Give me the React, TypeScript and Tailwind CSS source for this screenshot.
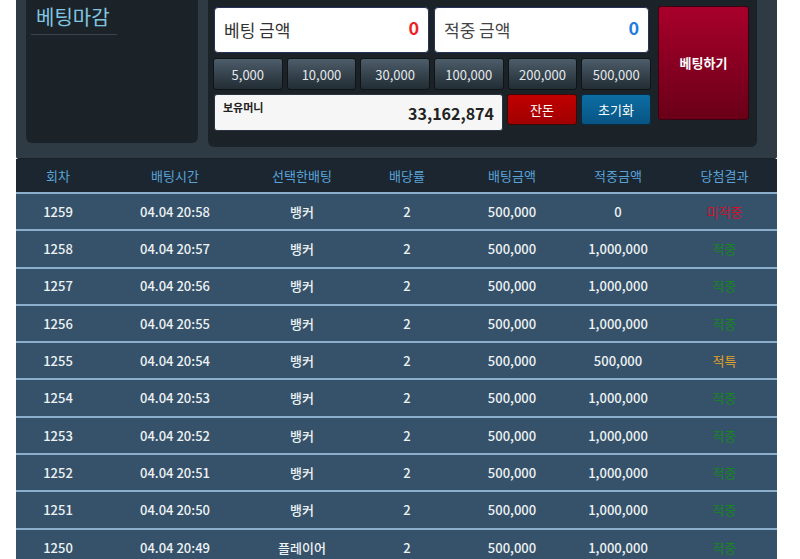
import React from "react";

type Row = {
  round: number;
  time: string;
  pick: string;
  odds: string;
  bet: string;
  win: string;
  result: "미적중" | "적중" | "적특";
};

const rows: Row[] = [
  { round: 1259, time: "04.04 20:58", pick: "뱅커", odds: "2", bet: "500,000", win: "0", result: "미적중" },
  { round: 1258, time: "04.04 20:57", pick: "뱅커", odds: "2", bet: "500,000", win: "1,000,000", result: "적중" },
  { round: 1257, time: "04.04 20:56", pick: "뱅커", odds: "2", bet: "500,000", win: "1,000,000", result: "적중" },
  { round: 1256, time: "04.04 20:55", pick: "뱅커", odds: "2", bet: "500,000", win: "1,000,000", result: "적중" },
  { round: 1255, time: "04.04 20:54", pick: "뱅커", odds: "2", bet: "500,000", win: "500,000", result: "적특" },
  { round: 1254, time: "04.04 20:53", pick: "뱅커", odds: "2", bet: "500,000", win: "1,000,000", result: "적중" },
  { round: 1253, time: "04.04 20:52", pick: "뱅커", odds: "2", bet: "500,000", win: "1,000,000", result: "적중" },
  { round: 1252, time: "04.04 20:51", pick: "뱅커", odds: "2", bet: "500,000", win: "1,000,000", result: "적중" },
  { round: 1251, time: "04.04 20:50", pick: "뱅커", odds: "2", bet: "500,000", win: "1,000,000", result: "적중" },
  { round: 1250, time: "04.04 20:49", pick: "플레이어", odds: "2", bet: "500,000", win: "1,000,000", result: "적중" },
];

const chips = ["5,000", "10,000", "30,000", "100,000", "200,000", "500,000"];

const resultColor: Record<Row["result"], string> = {
  미적중: "text-[#d0102a]",
  적중: "text-[#16861f]",
  적특: "text-[#e5a324]",
};

const cols = "grid grid-cols-[84px_150px_104px_106px_104px_108px_105px]";

export default function App() {
  return (
    <div className="min-h-screen bg-white font-['Noto_Sans_CJK_KR','Noto_Sans',sans-serif]">
      <div className="ml-[16px] w-[761px]">
        {/* top panel */}
        <div className="flex h-[159px] gap-[10px] rounded-b-[3px] border-b border-[#1a2227] bg-[#2e3b44] pl-[10px]">
          <div className="h-[143px] w-[172px] rounded-b-[6px] bg-[#1c2328] px-[5px] pt-[2px]">
            <div className="inline-block w-[86px] border-b border-[#3a454c] pb-[2px] pl-[5px] text-[20px] leading-[30px] text-[#80c6e2]">
              베팅마감
            </div>
          </div>

          <div className="flex h-[147px] w-[549px] gap-[7px] rounded-b-[6px] bg-[#1c2328] pl-[5px] pt-[6px]">
            <div className="flex w-[438px] flex-col gap-[4px] pt-[1px]">
              <div className="flex gap-[5px] pl-[1px]">
                <div className="flex h-[46px] w-[215px] items-center justify-between rounded-[4px] border border-[#27325a] bg-white px-[9px]">
                  <span className="text-[17px] text-[#333]">베팅 금액</span>
                  <span className="mb-[6px] text-[18px] font-bold text-[#ec2227]">0</span>
                </div>
                <div className="flex h-[46px] w-[215px] items-center justify-between rounded-[4px] border border-[#27325a] bg-white px-[9px]">
                  <span className="text-[17px] text-[#444]">적중 금액</span>
                  <span className="mb-[6px] text-[18px] font-bold text-[#1f7de0]">0</span>
                </div>
              </div>

              <div className="grid grid-cols-6 gap-[4px] pt-[1px]">
                {chips.map((c) => (
                  <button
                    key={c}
                    className="flex h-[32px] items-center justify-center rounded-[3px] border border-[#0f1417] bg-gradient-to-b from-[#4d5d6a] to-[#222d34] pt-[2px] text-[13px] text-[#e4e8ec]"
                  >
                    {c}
                  </button>
                ))}
              </div>

              <div className="flex gap-[4px] pl-[1px]">
                <div className="relative h-[37px] w-[289px] rounded-[3px] border border-[#2a3440] bg-[#f6f6f6]">
                  <span className="absolute left-[8px] top-[4px] text-[11px] font-bold text-[#222]">보유머니</span>
                  <span className="absolute right-[8px] top-[6px] text-[16px] font-bold text-[#222]">33,162,874</span>
                </div>
                <button className="h-[31px] w-[70px] rounded-[3px] border border-[#3a0a0a] bg-gradient-to-b from-[#c10000] to-[#a00000] text-[13px] text-white">
                  잔돈
                </button>
                <button className="h-[31px] w-[70px] rounded-[3px] border border-[#0a2a3f] bg-gradient-to-b from-[#0d6ea3] to-[#085484] text-[13px] text-white">
                  초기화
                </button>
              </div>
            </div>

            <button className="h-[114px] w-[91px] rounded-[3px] border border-[#3d0010] bg-gradient-to-b from-[#a9002b] to-[#6a0018] text-[13px] font-bold text-white">
              베팅하기
            </button>
          </div>
        </div>

        {/* table */}
        <div className={`${cols} h-[33px] items-center bg-[#1b2630] text-center text-[13px] text-[#5aa3d8]`}>
          <div>회차</div>
          <div>배팅시간</div>
          <div>선택한배팅</div>
          <div>배당률</div>
          <div>배팅금액</div>
          <div>적중금액</div>
          <div>당첨결과</div>
        </div>
        {rows.map((r) => (
          <div
            key={r.round}
            className={`${cols} h-[37.3px] items-center border-t-2 border-[#8aaecb] bg-[#36526a] text-center text-[13px] font-medium text-[#eef2f5]`}
          >
            <div>{r.round}</div>
            <div>{r.time}</div>
            <div>{r.pick}</div>
            <div>{r.odds}</div>
            <div>{r.bet}</div>
            <div>{r.win}</div>
            <div className={`font-normal ${resultColor[r.result]}`}>{r.result}</div>
          </div>
        ))}
      </div>
    </div>
  );
}
